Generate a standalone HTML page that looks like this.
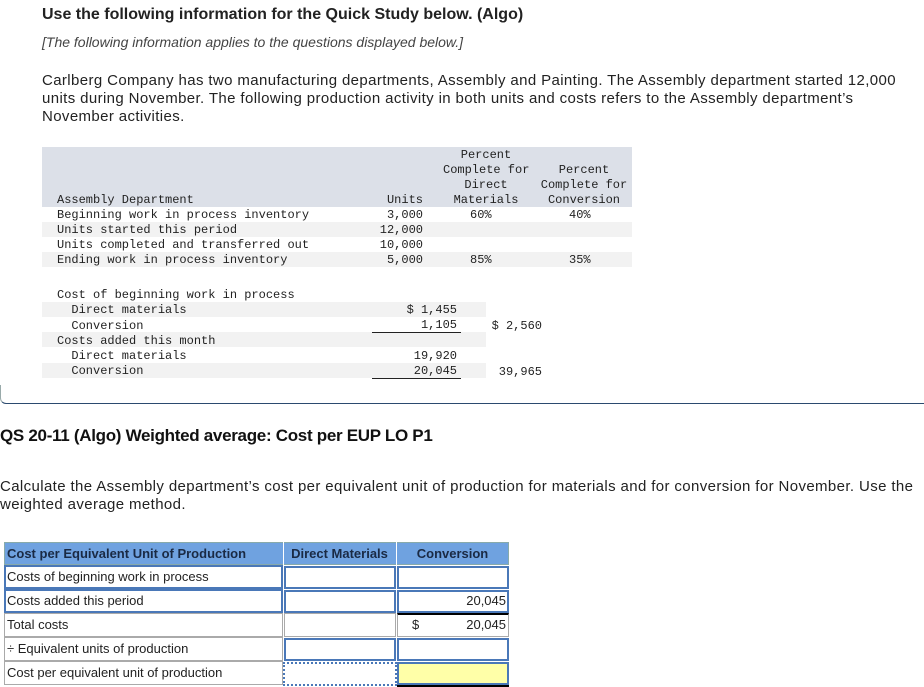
<!DOCTYPE html>
<html><head><style>
body{margin:0;width:924px;height:687px;background:#fff;position:relative;overflow:hidden;font-family:"Liberation Sans",Arial,sans-serif;color:#222}
.a{position:absolute;white-space:nowrap}
.m{font-family:"Liberation Mono",monospace;font-size:12px;color:#222}
.band{position:absolute;background:#f2f2f2}
.c{position:absolute;box-sizing:border-box;font-size:13px;}
</style></head><body>
<div class="a" style="left:42px;top:6px;font-size:16px;font-weight:bold">Use the following information for the Quick Study below. (Algo)</div>
<div class="a" style="left:42px;top:34px;font-size:14px;font-style:italic;color:#444">[The following information applies to the questions displayed below.]</div>
<div class="a" style="left:42px;top:72px;font-size:15px;line-height:18px;letter-spacing:0.38px">Carlberg Company has two manufacturing departments, Assembly and Painting. The Assembly department started 12,000<br>units during November. The following production activity in both units and costs refers to the Assembly department’s<br>November activities.</div>

<div style="position:absolute;left:42px;top:147px;width:590px;height:60px;background:#dce0e8"></div>
<div class="band" style="left:42px;top:222px;width:590px;height:15px"></div>
<div class="band" style="left:42px;top:252px;width:590px;height:15px"></div>
<div class="band" style="left:42px;top:302px;width:444px;height:15px"></div>
<div class="band" style="left:42px;top:332px;width:444px;height:15px"></div>
<div class="band" style="left:42px;top:363px;width:444px;height:15px"></div>

<div class="a m" style="left:443px;top:148px;width:86px;text-align:center;line-height:15px">Percent<br>Complete for<br>Direct<br>Materials</div>
<div class="a m" style="left:538px;top:163px;width:92px;text-align:center;line-height:15px">Percent<br>Complete for<br>Conversion</div>
<div class="a m" style="left:57px;top:193px;line-height:15px">Assembly Department<br>Beginning work in process inventory<br>Units started this period<br>Units completed and transferred out<br>Ending work in process inventory</div>
<div class="a m" style="left:370px;top:193px;width:53px;text-align:right;line-height:15px">Units<br>3,000<br>12,000<br>10,000<br>5,000</div>
<div class="a m" style="left:470px;top:208px;line-height:15px">60%<br><br><br>85%</div>
<div class="a m" style="left:569px;top:208px;line-height:15px">40%<br><br><br>35%</div>

<div class="a m" style="left:57px;top:288px;line-height:15.3px">Cost of beginning work in process<br>&nbsp;&nbsp;Direct materials<br>&nbsp;&nbsp;Conversion<br>Costs added this month<br>&nbsp;&nbsp;Direct materials<br>&nbsp;&nbsp;Conversion</div>
<div class="a m" style="left:380px;top:303px;width:77px;text-align:right;line-height:15.3px">$ 1,455<br>1,105<br><br>19,920<br>20,045</div>
<div style="position:absolute;left:372px;top:332px;width:89px;height:1px;background:#222"></div>
<div style="position:absolute;left:372px;top:378px;width:89px;height:1px;background:#222"></div>
<div class="a m" style="left:480px;top:319px;width:62px;text-align:right">$ 2,560</div>
<div class="a m" style="left:480px;top:365px;width:62px;text-align:right">39,965</div>

<div style="position:absolute;left:0;top:385px;width:930px;height:18px;border-bottom:1.5px solid #2b4a6f;border-left:1px solid #9aa;border-bottom-left-radius:6px"></div>

<div class="a" style="left:0;top:426px;font-size:17px;font-weight:bold;color:#111;letter-spacing:-0.3px">QS 20-11 (Algo) Weighted average: Cost per EUP LO P1</div>
<div class="a" style="left:0;top:478px;font-size:15px;line-height:18px;letter-spacing:0.38px">Calculate the Assembly department’s cost per equivalent unit of production for materials and for conversion for November. Use the<br>weighted average method.</div>

<!-- bottom table -->
<div class="c" style="left:4px;top:542px;width:505px;height:23px;background:#6fa2e0;border:1px solid #8aa"></div>
<div class="a" style="left:7px;top:546px;font-size:13px;font-weight:bold;color:#1a2a44">Cost per Equivalent Unit of Production</div>
<div style="position:absolute;left:283px;top:542px;width:1px;height:23px;background:#fff"></div>
<div style="position:absolute;left:396px;top:542px;width:1px;height:23px;background:#fff"></div>
<div class="a" style="left:283px;top:546px;width:113px;text-align:center;font-size:13px;font-weight:bold;color:#1a2a44">Direct Materials</div>
<div class="a" style="left:396px;top:546px;width:113px;text-align:center;font-size:13px;font-weight:bold;color:#1a2a44">Conversion</div>

<div class="c" style="left:4px;top:565px;width:279px;height:24px;border:2px solid #4a78b8"></div>
<div class="c" style="left:4px;top:589px;width:279px;height:24px;border:2px solid #4a78b8"></div>
<div class="c" style="left:4px;top:613px;width:279px;height:24px;border:1px solid #aaa"></div>
<div class="c" style="left:4px;top:637px;width:279px;height:24px;border:1px solid #aaa"></div>
<div class="c" style="left:4px;top:661px;width:279px;height:24px;border:1px solid #aaa"></div>
<div class="a" style="left:7px;top:565px;font-size:13px;line-height:24px">Costs of beginning work in process<br>Costs added this period<br>Total costs<br>÷ Equivalent units of production<br>Cost per equivalent unit of production</div>

<div class="c" style="left:284px;top:566px;width:112px;height:23px;border:2px solid #4a78b8"></div>
<div class="c" style="left:397px;top:566px;width:112px;height:23px;border:2px solid #4a78b8"></div>
<div class="c" style="left:284px;top:590px;width:112px;height:23px;border:2px solid #4a78b8"></div>
<div class="c" style="left:397px;top:590px;width:112px;height:23px;border:2px solid #4a78b8"></div>
<div class="c" style="left:284px;top:613px;width:112px;height:24px;border:1px solid #aaa"></div>
<div class="c" style="left:397px;top:613px;width:112px;height:24px;border:1px solid #aaa;border-top:2px solid #000"></div>
<div class="c" style="left:284px;top:638px;width:112px;height:23px;border:2px solid #4a78b8"></div>
<div class="c" style="left:397px;top:638px;width:112px;height:23px;border:2px solid #4a78b8"></div>
<div class="c" style="left:283px;top:662px;width:114px;height:24px;border:2px dotted #4a78b8"></div>
<div class="c" style="left:397px;top:662px;width:112px;height:23px;border:2px solid #4a78b8;background:#ffffa8"></div>
<div style="position:absolute;left:397px;top:685px;width:112px;height:2px;background:#000"></div>
<div class="a" style="left:412px;top:613px;font-size:13px;line-height:24px">$</div>
<div class="a" style="left:420px;top:589px;width:86px;text-align:right;font-size:13px;line-height:24px">20,045<br>20,045</div>
</body></html>
